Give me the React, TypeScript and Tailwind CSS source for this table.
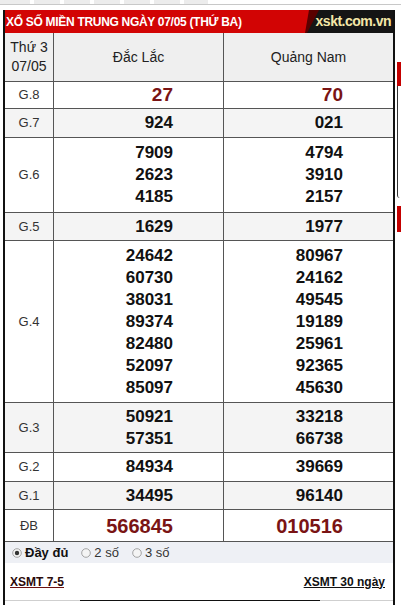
import React from "react";

type Row = { label: string; a: string[]; b: string[]; h: string; bg: boolean; kind?: "g8" | "db" };

const rows: Row[] = [
  { label: "G.8", a: ["27"], b: ["70"], h: "h-[27px]", bg: false, kind: "g8" },
  { label: "G.7", a: ["924"], b: ["021"], h: "h-[29px]", bg: true },
  { label: "G.6", a: ["7909", "2623", "4185"], b: ["4794", "3910", "2157"], h: "h-[75px]", bg: false },
  { label: "G.5", a: ["1629"], b: ["1977"], h: "h-[28px]", bg: true },
  {
    label: "G.4",
    a: ["24642", "60730", "38031", "89374", "82480", "52097", "85097"],
    b: ["80967", "24162", "49545", "19189", "25961", "92365", "45630"],
    h: "h-[162px]",
    bg: false,
  },
  { label: "G.3", a: ["50921", "57351"], b: ["33218", "66738"], h: "h-[50px]", bg: true },
  { label: "G.2", a: ["84934"], b: ["39669"], h: "h-[29px]", bg: false },
  { label: "G.1", a: ["34495"], b: ["96140"], h: "h-[28px]", bg: true },
  { label: "ĐB", a: ["566845"], b: ["010516"], h: "h-[32px]", bg: false, kind: "db" },
];

function Nums({ list, kind }: { list: string[]; kind?: "g8" | "db" }) {
  const cls =
    kind === "g8"
      ? "text-[19px] leading-[24px] text-[#7a1414]"
      : kind === "db"
      ? "text-[20px] leading-[26px] text-[#7a1414]"
      : "text-[17px] leading-[22px] text-[#111]";
  return (
    <div className={`flex flex-col items-end justify-center pr-[50px] font-bold ${cls}`}>
      {list.map((n, i) => (
        <div key={i}>{n}</div>
      ))}
    </div>
  );
}

function Radio({ checked }: { checked?: boolean }) {
  return (
    <svg width="10" height="10" viewBox="0 0 10 10" className="shrink-0">
      <circle cx="5" cy="5" r="4.3" fill="#f4f4f4" stroke="#9a9a9a" strokeWidth="0.9" />
      {checked && <circle cx="5" cy="5" r="2.2" fill="#333" />}
    </svg>
  );
}

export default function App() {
  return (
    <div className="w-[401px] h-[605px] bg-white overflow-hidden [font-family:'Liberation_Sans',Arial,sans-serif] flex flex-col">
      {/* top tab strip */}
      <div className="h-[10px] flex items-start shrink-0">
        <div className="flex gap-[4px] h-[5px] border-b border-[#c8c8c8] w-full">
          <div className="w-[30px] bg-[#ececec]" />
          <div className="w-[26px] bg-[#ececec]" />
          <div className="w-[26px] bg-[#ececec]" />
          <div className="w-[26px] bg-[#ececec]" />
          <div className="w-[26px] bg-[#ececec]" />
          <div className="w-[26px] bg-[#ececec]" />
          <div className="w-[24px] bg-[#ececec]" />
        </div>
      </div>

      <div className="flex flex-1">
        <div className="w-[3px]" />
        <div className="w-[392px] border-l-2 border-r-2 border-[#111] flex flex-col">
          {/* red header */}
          <div className="h-[23px] flex bg-[#d20404]">
            <div className="flex-1 min-w-0 flex items-center pl-[1px] text-white font-bold text-[12px] tracking-[-0.3px] whitespace-nowrap">
              XỔ SỐ MIỀN TRUNG NGÀY 07/05 (THỨ BA)
            </div>
            <svg width="14" height="23" viewBox="0 0 14 23" className="shrink-0 block">
              <polygon points="4,0 14,0 14,23 0,23" fill="#5a0000" />
              <polygon points="14,0 14,23 2,23" fill="#151515" />
            </svg>
            <div className="w-[74px] h-[23px] shrink-0 flex items-center justify-end pr-[2px] bg-[#151515]">
              <span className="text-[14px] font-bold tracking-[-0.5px] text-[#f4e7a8]">
                xskt.com.vn
              </span>
            </div>
          </div>

          {/* header row */}
          <div className="h-[49px] flex bg-[#efefef] border-b border-[#555] text-[#222] text-[14px]">
            <div className="w-[49px] border-r border-[#555] flex flex-col items-center justify-center leading-[19px]">
              <div>Thứ 3</div>
              <div>07/05</div>
            </div>
            <div className="w-[170px] border-r border-[#555] flex items-center justify-center">Đắc Lắc</div>
            <div className="flex-1 flex items-center justify-center">Quảng Nam</div>
          </div>

          {rows.map((r) => (
            <div key={r.label} className={`${r.h} flex border-b border-[#555] ${r.bg ? "bg-[#f4f4f4]" : "bg-white"}`}>
              <div className="w-[49px] border-r border-[#555] flex items-center justify-center text-[13px] text-[#333]">
                {r.label}
              </div>
              <div className="w-[170px] border-r border-[#555] flex items-center justify-end">
                <Nums list={r.a} kind={r.kind} />
              </div>
              <div className="flex-1 flex items-center justify-end">
                <Nums list={r.b} kind={r.kind} />
              </div>
            </div>
          ))}

          {/* options */}
          <div className="h-[21px] flex items-center bg-[#eef0f5] pl-[7px] text-[13px] text-[#333]">
            <Radio checked />
            <span className="ml-[3px] font-bold text-[#111]">Đầy đủ</span>
            <span className="ml-[13px]"><Radio /></span>
            <span className="ml-[3px]">2 số</span>
            <span className="ml-[13px]"><Radio /></span>
            <span className="ml-[3px]">3 số</span>
          </div>

          {/* links */}
          <div className="h-[37px] flex items-center justify-between pl-[5px] pr-[8px] text-[12px] font-bold">
            <span className="underline decoration-[#6a1010] text-[#2a0a0a]">XSMT 7-5</span>
            <span className="underline text-[#111]">XSMT 30 ngày</span>
          </div>

          {/* bottom line */}
          <div className="flex h-[1px]">
            <div className="w-[75px] bg-[#cfcfcf]" />
            <div className="w-[240px] bg-[#111]" />
            <div className="flex-1 bg-[#cfcfcf]" />
          </div>
        </div>

        {/* right neighbour sliver */}
        <div className="ml-[2px] w-[4px] flex flex-col">
          <div className="h-[52px]" />
          <div className="h-[24px] bg-[#c40000]" />
          <div className="h-[112px] border-l border-[#333] rounded-bl-[3px] w-[3px]" />
          <div className="h-[8px]" />
          <div className="h-[26px] bg-[#c40000]" />
        </div>
      </div>
    </div>
  );
}
